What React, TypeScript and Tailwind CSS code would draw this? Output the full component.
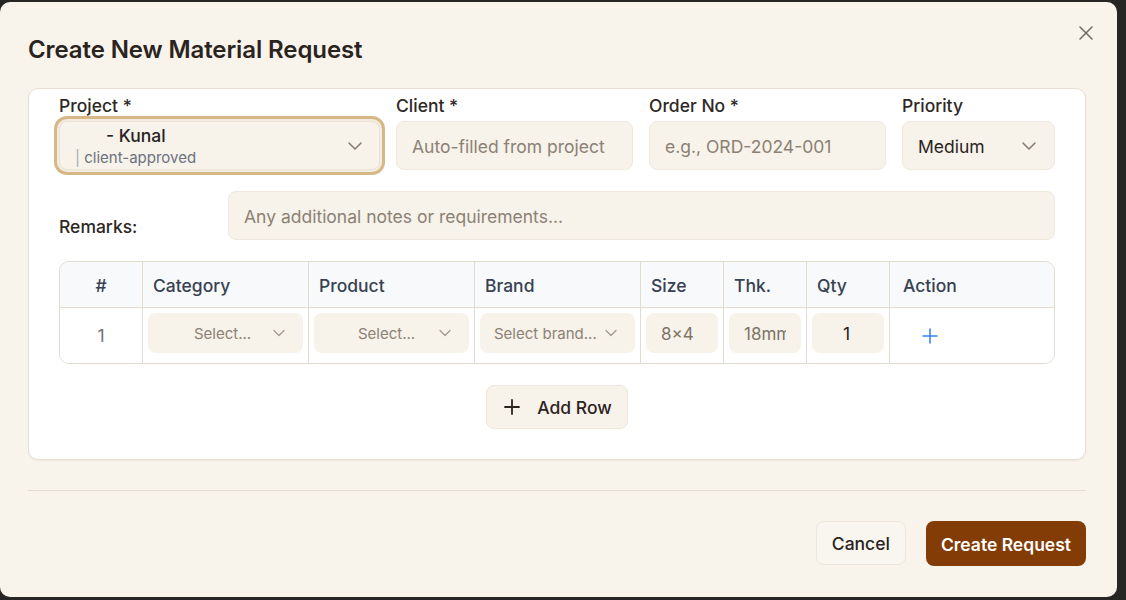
import React from "react";

const Chevron = ({ size = 24, sw = 1.5, className = "" }: { size?: number; sw?: number; className?: string }) => (
  <svg width={size} height={size} viewBox="0 0 24 24" fill="none" stroke="currentColor" strokeWidth={sw} strokeLinecap="round" strokeLinejoin="round" className={className}>
    <path d="m6 9 6 6 6-6" />
  </svg>
);

const Plus = ({ size = 24, sw = 2, className = "" }: { size?: number; sw?: number; className?: string }) => (
  <svg width={size} height={size} viewBox="0 0 24 24" fill="none" stroke="currentColor" strokeWidth={sw} strokeLinecap="round" strokeLinejoin="round" className={className}>
    <path d="M5 12h14" />
    <path d="M12 5v14" />
  </svg>
);

const CellSelect = ({ text, pl }: { text: string; pl: string }) => (
  <div className="flex h-[40px] items-center overflow-hidden rounded-[8px] bg-[#f7f2ea] pr-[14px]">
    <span className={`${pl} whitespace-nowrap pt-[2px] text-[15px] text-[#8b8174]`}>{text}</span>
    <Chevron size={20} sw={1.5} className="ml-auto shrink-0 text-[#a29b92]" />
  </div>
);

export default function App() {
  const headers = ["#", "Category", "Product", "Brand", "Size", "Thk.", "Qty", "Action"];
  return (
    <div className="h-[600px] w-[1126px] overflow-hidden bg-[#272625] pt-[2px] font-['Inter','Noto_Sans',sans-serif]">
      <div className="relative h-[595px] w-[1117px] rounded-[10px] bg-[#f8f4ec] pl-[28px] pr-[31px] pt-[32px]">
        <button className="absolute left-[1074px] top-[19px] text-[#6f6a63]">
          <svg width="24" height="24" viewBox="0 0 24 24" fill="none" stroke="currentColor" strokeWidth={1.5} strokeLinecap="round">
            <path d="M18 6 6 18" />
            <path d="m6 6 12 12" />
          </svg>
        </button>
        <h2 className="text-[24px] font-semibold leading-[32px] tracking-[-0.1px] text-[#2a231e]">Create New Material Request</h2>

        <div className="mt-[22px] rounded-[10px] border border-[#e6dfd3] bg-white px-[30px] pb-[30px] pt-[5px] shadow-[0_1px_2px_rgba(60,40,20,0.06)]">
          {/* row 1 */}
          <div className="grid grid-cols-[321px_237px_237px_153px] gap-x-4">
            <div>
              <div className="text-[17.5px] font-medium leading-[24px] text-[#2e2824]">Project *</div>
              <div className="mt-[3px] flex h-[49px] items-center rounded-[8px] border border-[#ebe3d6] bg-[#f7f2ea] pl-[15px] pr-[12px] shadow-[0_0_0_2px_#f2ebdf,0_0_0_5px_#d6b887]">
                <div className="flex flex-col pt-[3px]">
                  <span className="ml-[31px] text-[17.5px] font-medium leading-[20px] text-[#2a231e]">- Kunal</span>
                  <span className="mt-[2px] text-[15px] leading-[20px] text-[#6b7280]">
                    <span className="text-[#a8adb5]">|</span> client-approved
                  </span>
                </div>
                <Chevron size={24} sw={1.5} className="ml-auto text-[#807a73]" />
              </div>
            </div>
            <div>
              <div className="text-[17.5px] font-medium leading-[24px] text-[#2e2824]">Client *</div>
              <div className="mt-[3px] flex h-[49px] items-center rounded-[8px] border border-[#efe8dc] bg-[#f7f2ea] pl-[15px] pt-[3px] text-[17.5px] text-[#8b8174]">
                Auto-filled from project
              </div>
            </div>
            <div>
              <div className="text-[17.5px] font-medium leading-[24px] text-[#2e2824]">Order No *</div>
              <div className="mt-[3px] flex h-[49px] items-center rounded-[8px] border border-[#efe8dc] bg-[#f7f2ea] pl-[15px] pt-[3px] text-[17.5px] text-[#8b8174]">
                e.g., ORD-2024-001
              </div>
            </div>
            <div>
              <div className="text-[17.5px] font-medium leading-[24px] text-[#2e2824]">Priority</div>
              <div className="mt-[3px] flex h-[49px] items-center rounded-[8px] border border-[#efe8dc] bg-[#f7f2ea] pl-[15px] pr-[13px] text-[17.5px] text-[#2a231e]">
                <span className="pt-[3px]">Medium</span>
                <Chevron size={24} sw={1.5} className="ml-auto text-[#807a73]" />
              </div>
            </div>
          </div>

          {/* remarks */}
          <div className="mt-[21px] flex">
            <div className="w-[169px] shrink-0 pt-[24px] text-[17.5px] font-medium leading-[24px] text-[#2e2824]">Remarks:</div>
            <div className="flex h-[49px] flex-1 items-center rounded-[8px] border border-[#efe8dc] bg-[#f7f2ea] pl-[15px] pt-[3px] text-[17.5px] text-[#8b8174]">
              Any additional notes or requirements...
            </div>
          </div>

          {/* table */}
          <div className="mt-[21px] overflow-hidden rounded-[10px] border border-[#e2dbcf]">
            <div className="grid grid-cols-[83px_166px_166px_166px_83px_83px_83px_1fr] border-b border-[#e2dbcf] bg-[#f8f9fa]">
              {headers.map((h, i) => (
                <div
                  key={h}
                  className={`flex h-[45px] items-center pt-[3px] text-[17.5px] font-medium text-[#374151] ${i === 0 ? "justify-center" : i === 7 ? "pl-[13px]" : "pl-[10px]"} ${i < 7 ? "border-r border-[#e2dbcf]" : ""}`}
                >
                  {h}
                </div>
              ))}
            </div>
            <div className="grid h-[55px] grid-cols-[83px_166px_166px_166px_83px_83px_83px_1fr] bg-white">
              <div className="flex items-center justify-center border-r border-[#e2dbcf] pt-[2px] text-[17.5px] text-[#737373]">1</div>
              <div className="border-r border-[#e2dbcf] p-[5px]">
                <CellSelect text="Select..." pl="pl-[46px]" />
              </div>
              <div className="border-r border-[#e2dbcf] p-[5px]">
                <CellSelect text="Select..." pl="pl-[44px]" />
              </div>
              <div className="border-r border-[#e2dbcf] p-[5px]">
                <CellSelect text="Select brand..." pl="pl-[14px]" />
              </div>
              <div className="border-r border-[#e2dbcf] p-[5px]">
                <div className="flex h-[40px] items-center rounded-[8px] bg-[#f7f2ea] px-[15px] pt-[3px] text-[17px] text-[#7d7466]">
                  <div className="overflow-hidden whitespace-nowrap">8×4</div>
                </div>
              </div>
              <div className="border-r border-[#e2dbcf] p-[5px]">
                <div className="flex h-[40px] items-center rounded-[8px] bg-[#f7f2ea] px-[15px] pt-[3px] text-[17px] text-[#7d7466]">
                  <div className="overflow-hidden whitespace-nowrap">18mm</div>
                </div>
              </div>
              <div className="border-r border-[#e2dbcf] p-[5px]">
                <div className="flex h-[40px] items-center justify-center rounded-[8px] bg-[#f7f2ea] pr-[3px] pt-[3px] text-[17.5px] text-[#2a231e]">1</div>
              </div>
              <div className="flex items-center pl-[33px] pt-[1px]">
                <Plus size={24} sw={1.6} className="-ml-[5px] text-[#3b82f6]" />
              </div>
            </div>
          </div>

          {/* add row */}
          <div className="mt-[21px] flex justify-center">
            <button className="flex h-[44px] items-center gap-[13px] rounded-[8px] border border-[#ede6da] bg-[#f7f2ea] pl-[13px] pr-[15px] text-[17.5px] font-medium text-[#2a231e]">
              <Plus size={24} sw={1.8} />
              <span className="pt-[3px]">Add Row</span>
            </button>
          </div>
        </div>

        <div className="mt-[30px] h-px bg-[#e3dccf]" />

        <div className="mt-[30px] flex justify-end gap-5">
          <button className="h-[44px] rounded-[8px] border border-[#ede6da] bg-[#f9f6f0] px-[15px] pt-[3px] text-[17.5px] font-medium text-[#2a231e]">
            Cancel
          </button>
          <button className="h-[45px] rounded-[8px] bg-[#833c05] px-[15px] pt-[3px] text-[17.5px] font-semibold text-white">
            Create Request
          </button>
        </div>
      </div>
    </div>
  );
}
